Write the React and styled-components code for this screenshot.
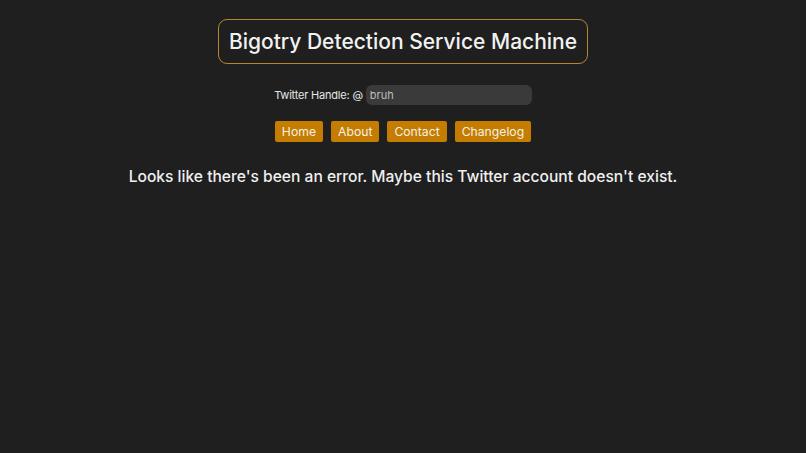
import React from "react";
import styled, { createGlobalStyle } from "styled-components";

const Global = createGlobalStyle`
  html, body { margin: 0; padding: 0; background: #1f1f1f; }
  body { font-family: Inter, "DejaVu Sans", sans-serif; color: #f0f0f0; }
  * { box-sizing: border-box; }
`;

const Page = styled.div`
  min-height: 453px;
  display: flex;
  flex-direction: column;
  align-items: center;
  padding-top: 19px;
`;

const TitleBox = styled.h1`
  margin: 0;
  border: 1px solid #b7862e;
  border-radius: 9px;
  padding: 0 10px;
  height: 45px;
  display: flex;
  align-items: center;
  font-size: 21px;
  font-weight: 500;
  color: #f2f2f2;
`;

const HandleRow = styled.div`
  margin-top: 21px;
  display: flex;
  align-items: center;
  gap: 3px;
  font-size: 11px;
  letter-spacing: -0.2px;
  color: #e6e6e6;
`;

const Input = styled.input`
  width: 166px;
  height: 20px;
  border: none;
  border-radius: 6px;
  background: #3a3a3a;
  color: #bdbdbd;
  font-family: inherit;
  font-size: 11px;
  padding: 0 4px;
  outline: none;
`;

const Nav = styled.div`
  margin-top: 16px;
  display: flex;
  gap: 8px;
`;

const NavButton = styled.button`
  height: 21px;
  padding: 0 7px;
  border: none;
  border-radius: 2px;
  background: #c47d00;
  color: #f5f0e6;
  font-family: inherit;
  font-size: 12.2px;
  cursor: pointer;
`;

const ErrorText = styled.p`
  margin: 25px 0 0;
  font-size: 15.6px;
  font-weight: 500;
  color: #f0f0f0;
`;

export default function App() {
  return (
    <>
      <Global />
      <Page>
        <TitleBox>Bigotry Detection Service Machine</TitleBox>
        <HandleRow>
          <span>Twitter Handle: @</span>
          <Input defaultValue="bruh" />
        </HandleRow>
        <Nav>
          <NavButton>Home</NavButton>
          <NavButton>About</NavButton>
          <NavButton>Contact</NavButton>
          <NavButton>Changelog</NavButton>
        </Nav>
        <ErrorText>Looks like there's been an error. Maybe this Twitter account doesn't exist.</ErrorText>
      </Page>
    </>
  );
}
